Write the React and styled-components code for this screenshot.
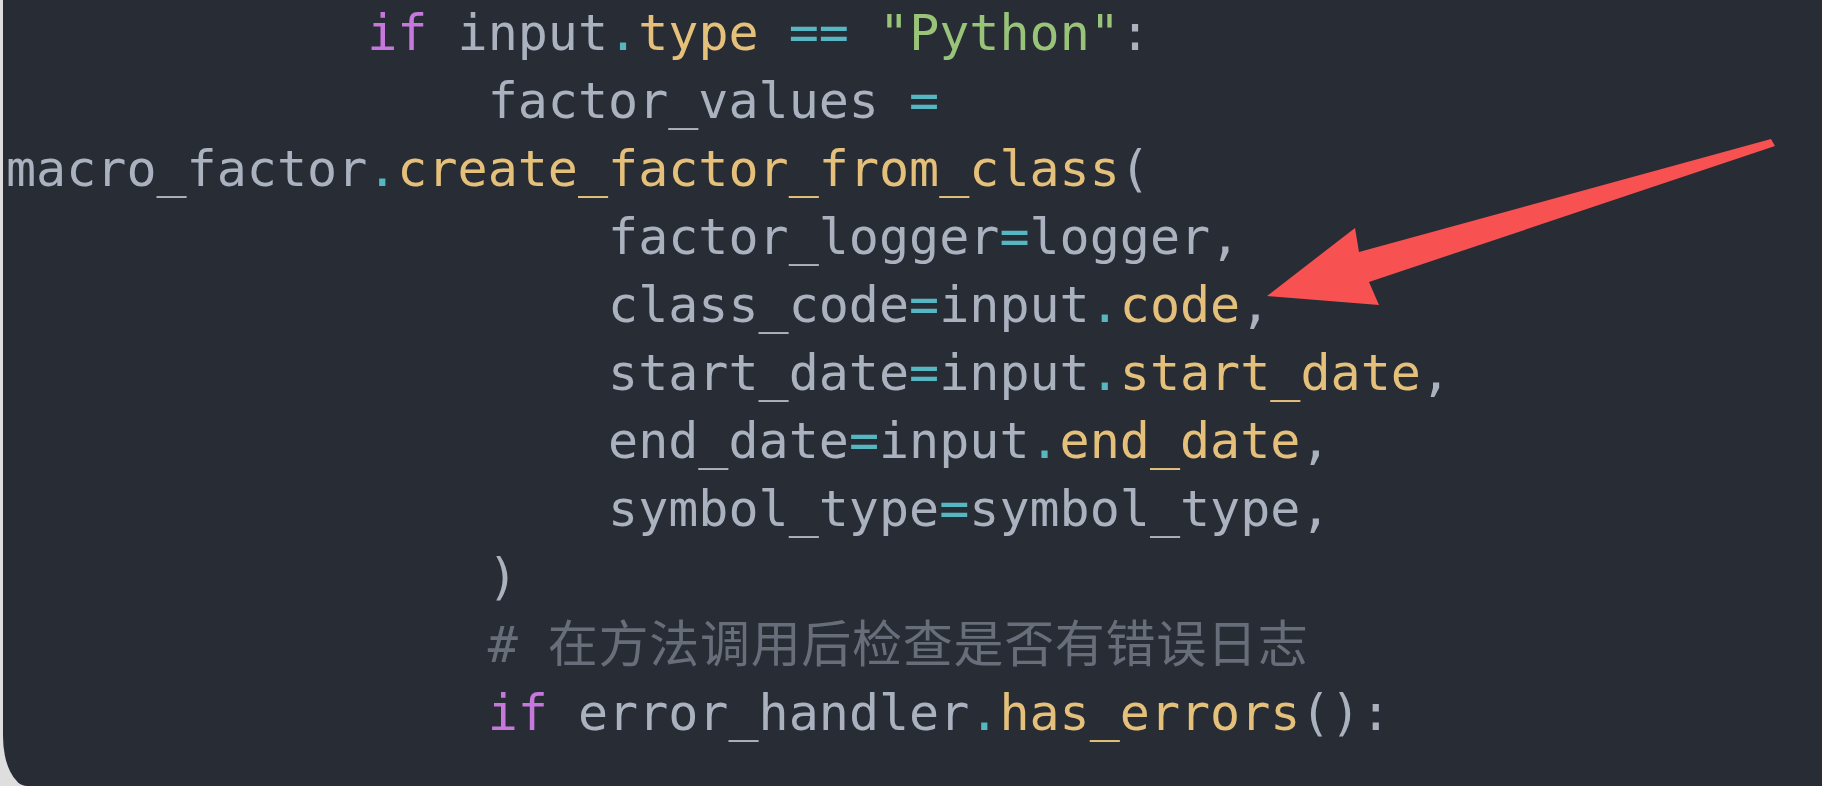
import styled, { createGlobalStyle } from "styled-components";

const GlobalStyle = createGlobalStyle`
  html, body {
    margin: 0;
    padding: 0;
    background: #dedede;
    overflow: hidden;
  }
`;

const colors = {
  plain: "#abb2bf",
  keyword: "#c678dd",
  op: "#56b6c2",
  attr: "#e5c07b",
  string: "#98c379",
  comment: "#676e7a",
};

const CodeBlock = styled.div`
  position: relative;
  margin-left: 3px;
  height: 786px;
  background: #282c34;
  border-bottom-left-radius: 24px 50px;
  overflow: hidden;
`;

const Pre = styled.pre`
  margin: -1px 0 0 3px;
  padding: 0;
  font-family: "DejaVu Sans Mono", "Noto Sans CJK SC", monospace;
  font-size: 50px;
  line-height: 68px;
  color: ${colors.plain};
  white-space: pre;
`;

const Line = styled.div`
  height: 68px;
  overflow: visible;
`;

const Token = styled.span`
  color: ${(p) => colors[p.$kind] || colors.plain};
`;

const Cjk = styled.span`
  font-family: "Noto Sans CJK SC", sans-serif;
  font-size: 50px;
  line-height: 0;
  letter-spacing: 0.7px;
  color: ${colors.comment};
`;

const Arrow = styled.svg`
  position: absolute;
  left: -3px;
  top: 0;
  width: 1822px;
  height: 786px;
  pointer-events: none;
`;

const lines = [
  [["", "            "], ["keyword", "if"], ["", " input"], ["op", "."], ["attr", "type"], ["", " "], ["op", "=="], ["", " "], ["string", "\"Python\""], ["", ":"]],
  [["", "                factor_values "], ["op", "="]],
  [["", "macro_factor"], ["op", "."], ["attr", "create_factor_from_class"], ["", "("]],
  [["", "                    factor_logger"], ["op", "="], ["", "logger,"]],
  [["", "                    class_code"], ["op", "="], ["", "input"], ["op", "."], ["attr", "code"], ["", ","]],
  [["", "                    start_date"], ["op", "="], ["", "input"], ["op", "."], ["attr", "start_date"], ["", ","]],
  [["", "                    end_date"], ["op", "="], ["", "input"], ["op", "."], ["attr", "end_date"], ["", ","]],
  [["", "                    symbol_type"], ["op", "="], ["", "symbol_type,"]],
  [["", "                )"]],
  [["", "                "], ["comment", "# "], ["cjk", "在方法调用后检查是否有错误日志"]],
  [["", "                "], ["keyword", "if"], ["", " error_handler"], ["op", "."], ["attr", "has_errors"], ["", "():"]],
];

export default function App() {
  return (
    <>
      <GlobalStyle />
      <CodeBlock>
        <Pre>
          {lines.map((line, i) => (
            <Line key={i}>
              {line.map(([kind, text], j) =>
                kind === "cjk" ? (
                  <Cjk key={j}>{text}</Cjk>
                ) : (
                  <Token key={j} $kind={kind}>
                    {text}
                  </Token>
                )
              )}
            </Line>
          ))}
        </Pre>
        <Arrow viewBox="0 0 1822 786">
          <polygon
            points="1267,296 1355,228 1359,252 1771,139 1775,146 1369,282 1379,305"
            fill="#f85151"
          />
        </Arrow>
      </CodeBlock>
    </>
  );
}
